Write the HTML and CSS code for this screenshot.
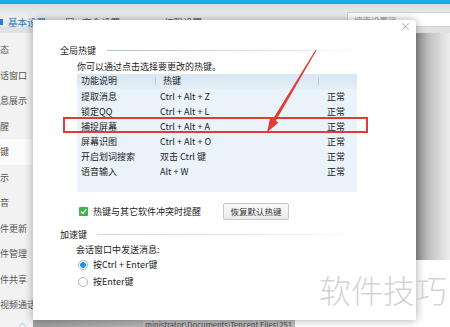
FILE: index.html
```html
<!DOCTYPE html>
<html lang="zh-CN">
<head>
    <meta charset="UTF-8">
    <title>热键设置</title>
    <link rel="stylesheet" href="styles.css">
</head>
<body>
    <div class="app">
        <div class="topline"></div>
        <div class="tabs">
            <div class="tab active"><span class="tab-icon blue"></span>基本设置</div>
            <div class="tab"><span class="tab-icon box"></span>安全设置</div>
            <div class="tab"><span class="tab-icon user"></span>权限设置</div>
            <div class="search">搜索设置项</div>
        </div>
        <div class="main">
            <div class="sidebar">
                <div class="side-item">态</div>
                <div class="side-item">话窗口</div>
                <div class="side-item">息展示</div>
                <div class="side-item">醒</div>
                <div class="side-item current">键</div>
                <div class="side-item">示</div>
                <div class="side-item">音</div>
                <div class="side-item">件更新</div>
                <div class="side-item">件管理</div>
                <div class="side-item">件共享</div>
                <div class="side-item">视频通话</div>
            </div>
            <div class="content">
                <div class="shade"></div>
                <div class="blank"></div>
            </div>
        </div>
        <div class="statusbar">
            <div class="status-left">
                <svg class="chevron" width="9" height="5" viewBox="0 0 9 5"><path d="M1 4.5 L4.5 1 L8 4.5" fill="none" stroke="#9cc3e0" stroke-width="1"/></svg>
            </div>
            <div class="status-gray"></div>
            <div class="status-path">ministrator\Documents\Tencent Files\251</div>
        </div>

        <div class="dialog">
            <div class="close">×</div>
            <div class="legend"><span>全局热键</span><i class="legend-line"></i></div>
            <div class="hint">你可以通过点击选择要更改的热键。</div>
            <div class="hotkeys">
                <div class="row head">
                    <div class="c1">功能说明</div>
                    <div class="c2 sep">热键</div>
                    <div class="c3 sep"></div>
                </div>
                <div class="row"><div class="c1">提取消息</div><div class="c2">Ctrl + Alt + Z</div><div class="c3">正常</div></div>
                <div class="row"><div class="c1">锁定QQ</div><div class="c2">Ctrl + Alt + L</div><div class="c3">正常</div></div>
                <div class="row"><div class="c1">捕捉屏幕</div><div class="c2">Ctrl + Alt + A</div><div class="c3">正常</div></div>
                <div class="row"><div class="c1">屏幕识图</div><div class="c2">Ctrl + Alt + O</div><div class="c3">正常</div></div>
                <div class="row"><div class="c1">开启划词搜索</div><div class="c2">双击 Ctrl 键</div><div class="c3">正常</div></div>
                <div class="row"><div class="c1">语音输入</div><div class="c2">Alt + W</div><div class="c3">正常</div></div>
            </div>
            <div class="check-row">
                <span class="checkbox"><svg width="9" height="9" viewBox="0 0 9 9"><path d="M1.8 4.6 L3.8 6.5 L7.3 2.4" fill="none" stroke="#fff" stroke-width="1.4"/></svg></span>
                <span class="check-label">热键与其它软件冲突时提醒</span>
                <button class="btn">恢复默认热键</button>
            </div>
            <div class="legend second"><span>加速键</span><i class="legend-line"></i></div>
            <div class="sub">会话窗口中发送消息:</div>
            <div class="radio-row"><span class="radio on"></span>按Ctrl + Enter键</div>
            <div class="radio-row"><span class="radio"></span>按Enter键</div>
            <div class="mark"></div>
        </div>

        <svg class="arrow" width="450" height="327" viewBox="0 0 450 327">
            <polygon points="315.6,49.7 316.6,50.3 275.8,120.8 278.3,122.4 267,132.5 270.1,117.6 272.8,119.2" fill="#e53a36"/>
        </svg>
        <div class="watermark">软件技巧</div>
    </div>
</body>
</html>
```

FILE: styles.css
```css
body { margin: 0; font-family: "Noto Sans CJK SC", "Noto Sans", sans-serif; font-size: 9px; color: #222; }
.app { position: relative; width: 450px; height: 327px; overflow: hidden; display: flex; flex-direction: column; background: #fff; }

.topline { height: 4px; background: #1cace9; }
.tabs { height: 29px; display: flex; align-items: flex-start; background: linear-gradient(#d9dbdd, #eceef0 40%, #e4e6e8); position: relative; }
.tab { display: flex; align-items: center; height: 12px; margin-top: 12px; color: #555; font-size: 9.5px; }
.tab.active { color: #2b7cc2; width: 66px; }
.tab:nth-child(2) { width: 80px; }
.tab-icon { display: inline-block; margin-right: 5px; }
.tab-icon.blue { width: 3px; height: 6px; background: #2b7cc2; margin-right: 5px; }
.tab-icon.box { width: 6px; height: 6px; border: 1px solid #888; margin-right: 8px; }
.tab-icon.user { width: 6px; height: 4px; border: 1px solid #999; border-radius: 4px 4px 0 0; border-bottom: none; margin-right: 10px; margin-top: 2px; }
.search { position: absolute; left: 347px; top: 8px; width: 110px; height: 15px; background: #fff; border: 1px solid #cfd3d6; color: #999; font-size: 8.5px; line-height: 15px; padding-left: 6px; box-sizing: border-box; }
.tabs::after { content: ""; position: absolute; left: 0; right: 0; bottom: 0; height: 6px; background: #dfe2e4; }

.main { height: 287px; display: flex; }
.sidebar { width: 40px; background: #f2f2f2; padding-top: 4px; box-sizing: border-box; overflow: hidden; }
.side-item { height: 25.5px; line-height: 25.5px; white-space: nowrap; color: #555; font-size: 9px; }
.side-item.current { background: #fbfbfb; }
.content { flex: 1; display: flex; flex-direction: column; }
.shade { height: 227px; background: linear-gradient(to right, #8e8e8e 376px, #c4c4c4 390px, #ededed 410px); }
.blank { flex: 1; background: #fff; }

.statusbar { height: 7px; display: flex; }
.status-left { width: 33px; background: #f4f4f4; position: relative; }
.chevron { position: absolute; left: 18px; top: 2px; }
.status-gray { width: 110px; background: linear-gradient(to right, #9e9e9e, #b4b4b4); }
.status-path { flex: none; padding: 0 3px 0 2px; background: #bdbdbd; color: #444; font-size: 7.6px; line-height: 9px; white-space: nowrap; }

.dialog { position: absolute; left: 33px; top: 20px; width: 383px; height: 300px; background: #fff; border-top-right-radius: 4px; box-shadow: 0 0 10px rgba(0, 0, 0, 0.35); padding: 24px 0 0 27px; box-sizing: border-box; }
.close { position: absolute; right: 5px; top: 0; color: #aaa; font-size: 11px; line-height: 12px; }
.legend { display: flex; align-items: center; height: 12px; margin-right: 51px; color: #222; }
.legend-line { flex: 1; height: 1px; margin-left: 11px; background: linear-gradient(to right, #a9c2d8, #dfe9f1 70%, #fff); }
.legend.second { margin-top: 8px; }
.legend.second .legend-line { margin-left: 10px; background: linear-gradient(to right, #c5d6e4, #eef3f7 80%, #fff); }
.hint { margin: 5px 0 0 17px; height: 12px; line-height: 12px; }

.hotkeys { margin: 1px 0 0 17px; width: 280px; height: 118px; background: #eaf3fa; }
.row { display: grid; grid-template-columns: 78px 163px 39px; height: 15px; line-height: 15px; }
.row.head { height: 14.5px; line-height: 14.5px; background: linear-gradient(#d8e7f3, #e3eef7); }
.row.head .c2 { padding-left: 8px; }
.c1 { padding-left: 4px; }
.c2 { padding-left: 5px; }
.c3 { padding-left: 9px; }
.sep { position: relative; }
.sep::before { content: ""; position: absolute; left: 0; top: 3px; height: 8px; width: 1px; background: #b9cde0; }

.check-row { display: flex; align-items: center; height: 18px; margin: 10px 0 0 19px; }
.checkbox { width: 9px; height: 9px; background: #3db34a; border-radius: 1px; display: flex; }
.check-label { margin-left: 5px; width: 130px; }
.btn { font-family: inherit; font-size: 8.5px; color: #333; height: 17px; width: 66px; padding: 0; background: linear-gradient(#fafafa, #ececec); border: 1px solid #c6c6c6; border-radius: 2px; }

.sub { margin: 4px 0 0 16px; height: 12px; line-height: 12px; }
.radio-row { display: flex; align-items: center; height: 17px; margin-left: 18px; }
.radio { width: 8px; height: 8px; border: 1px solid #b5b5b5; border-radius: 50%; margin-right: 5px; background: #fff; }
.radio.on { border-color: #8fc5ec; background: radial-gradient(circle, #2b8ee0 2.6px, #fff 3.2px); }

.mark { position: absolute; left: 30px; top: 97px; width: 305px; height: 16px; border: 2px solid #e2393b; box-sizing: border-box; }
.arrow { position: absolute; left: 0; top: 0; pointer-events: none; }
.watermark { position: absolute; left: 319px; top: 271px; font-size: 32px; font-weight: 300; line-height: 36px; color: #d4d4d4; }
```
